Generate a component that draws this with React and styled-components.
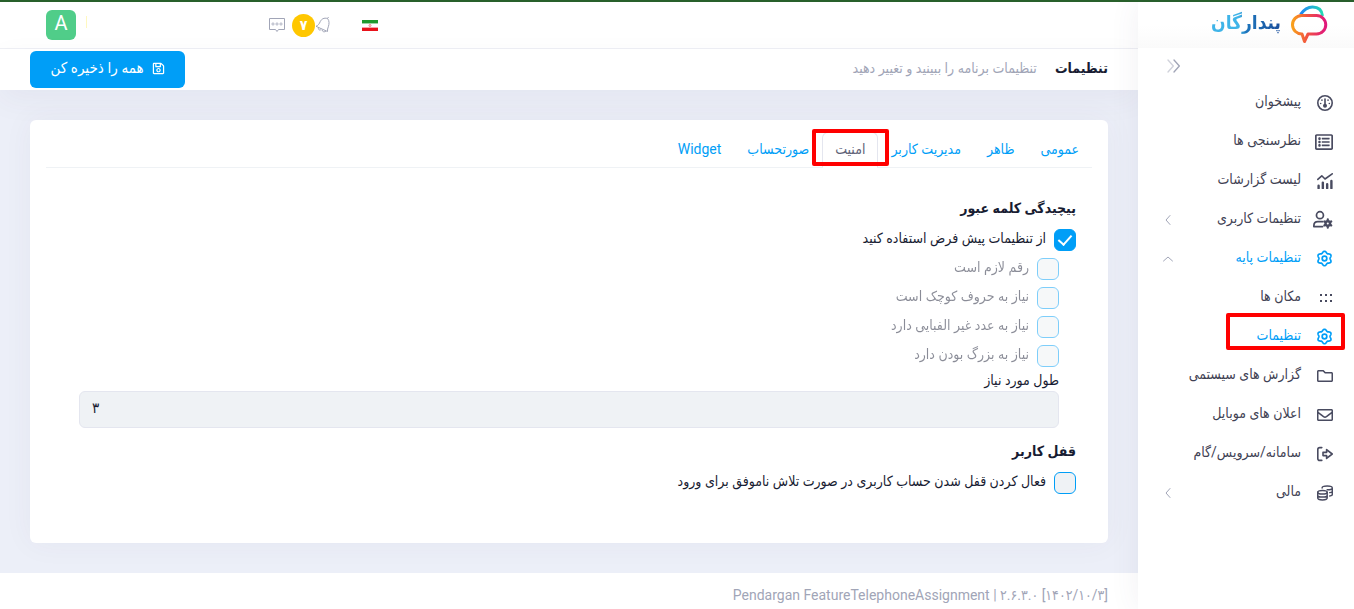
import styled, { createGlobalStyle, css } from "styled-components";
import { FaRegListAlt, FaRegFolder, FaRegEnvelope, FaRegSave } from "react-icons/fa";

const blue = "#009ef7";

const GlobalStyle = createGlobalStyle`
  * {
    box-sizing: border-box;
  }

  body {
    margin: 0;
    background: #eceff8;
    color: #181c32;
    font-family: Roboto, "DejaVu Sans Condensed", "DejaVu Sans", sans-serif;
    font-size: 14px;
  }

  button,
  input {
    font-family: inherit;
  }
`;

const Page = styled.div`
  direction: rtl;
  display: flex;
  min-height: 100vh;
  border-top: 2px solid #28602b;
`;

const Sidebar = styled.aside`
  width: 216px;
  flex-shrink: 0;
  display: flex;
  flex-direction: column;
  background: #fff;
  z-index: 2;
  box-shadow: 0 0 28px rgba(82, 63, 105, 0.08);
`;

const Brand = styled.a`
  height: 46px;
  display: flex;
  align-items: center;
  gap: 9px;
  padding: 0 26px;
  background: linear-gradient(#fff 50%, #fafafa);
  text-decoration: none;
`;

const BrandName = styled.span`
  font-size: 19px;
  line-height: 36px;
  padding-bottom: 4px;
  font-weight: 700;
  background: linear-gradient(to left, #1b4f9c, #1d75bc 50%, #3fb4e8 60%);
  background-clip: text;
  color: transparent;
`;

const Toggle = styled.button`
  align-self: flex-end;
  display: flex;
  margin: 0 0 0 28px;
  padding: 10px 0 9px;
  border: 0;
  background: none;
`;

const Nav = styled.nav`
  display: flex;
  flex-direction: column;
`;

const NavLink = styled.a`
  position: relative;
  height: 39px;
  display: flex;
  align-items: center;
  gap: 12px;
  padding: 0 21px 0 25px;
  color: ${(p) => (p.$active ? blue : "#3f4254")};
  text-decoration: none;
`;

const NavIcon = styled.span`
  width: 20px;
  display: flex;
  color: ${(p) => (p.$active ? blue : "#494b60")};
`;

const NavText = styled.span`
  flex: 1;
  line-height: 20px;
  padding-bottom: 3px;
`;

const marked = css`
  content: "";
  position: absolute;
  border: 4px solid #f00;
  border-radius: 2px;
`;

const MarkedLink = styled(NavLink)`
  &::after {
    ${marked}
    inset: -4px 9px 6px 88px;
  }
`;

const Main = styled.div`
  flex: 1;
  min-width: 0;
  display: flex;
  flex-direction: column;
`;

const Header = styled.header`
  height: 47px;
  display: flex;
  align-items: center;
  justify-content: flex-end;
  gap: 10px;
  padding: 0 46px;
  background: #fff;
  border-bottom: 1px solid #eff0f5;
`;

const Tools = styled.div`
  display: flex;
  align-items: center;
  margin-left: 171px;
`;

const Divider = styled.span`
  width: 1px;
  height: 12px;
  margin-bottom: 6px;
  background: #fff8c0;
`;

const ToolButton = styled.button`
  display: flex;
  padding: 0;
  border: 0;
  background: none;
`;

const FlagButton = styled(ToolButton)`
  margin-left: 31px;
`;

const Count = styled.span`
  width: 23px;
  height: 23px;
  margin-left: 6px;
  border-radius: 50%;
  background: #ffc700;
  color: #fff;
  font-weight: 700;
  line-height: 22px;
  text-align: center;
`;

const Avatar = styled.button`
  width: 30px;
  height: 30px;
  padding: 0 0 5px;
  border: 0;
  border-radius: 6px;
  background: #50cd89;
  color: #fff;
  font-size: 20px;
`;

const Subheader = styled.div`
  height: 41px;
  display: flex;
  align-items: center;
  gap: 18px;
  padding: 0 30px;
  background: #fff;
  box-shadow: 0 10px 30px rgba(82, 63, 105, 0.05);
`;

const PageTitle = styled.h1`
  margin: 0;
  padding-bottom: 3px;
  font-size: 14px;
  font-weight: 700;
`;

const PageNote = styled.span`
  flex: 1;
  padding-bottom: 3px;
  color: #a1a5b7;
`;

const SaveButton = styled.button`
  width: 155px;
  height: 37px;
  display: flex;
  align-items: center;
  justify-content: center;
  gap: 8px;
  padding: 0 0 3px;
  border: 0;
  border-radius: 6px;
  background: ${blue};
  color: #fff;
  font-size: 15px;
`;

const Content = styled.main`
  flex: 1;
  padding: 30px;
`;

const Card = styled.section`
  height: 100%;
  padding: 12px 16px 46px;
  border-radius: 6px;
  background: #fff;
  box-shadow: 0 0 30px rgba(82, 63, 105, 0.05);
`;

const Tabs = styled.div`
  display: flex;
  border-bottom: 1px solid #eff2f5;
`;

const Tab = styled.button`
  position: relative;
  height: 36px;
  margin-bottom: -1px;
  padding: 0 12px 3px;
  border: 1px solid ${(p) => (p.$active ? "#e4e6ef" : "transparent")};
  border-bottom-color: ${(p) => (p.$active ? "#fff" : "transparent")};
  border-radius: 6px 6px 0 0;
  background: none;
  color: ${(p) => (p.$active ? "#5e6278" : blue)};
  font-size: 14px;
`;

const MarkedTab = styled(Tab)`
  &::after {
    ${marked}
    inset: -4px -12px 1px -11px;
  }
`;

const Form = styled.form`
  padding: 26px 16px 0;
`;

const Heading = styled.h2`
  margin: 0 0 3px;
  font-size: 14px;
  line-height: 28px;
  font-weight: 700;
`;

const Check = styled.label`
  height: 29px;
  display: flex;
  align-items: center;
  gap: 8px;
  opacity: ${(p) => (p.$off ? 0.5 : 1)};
`;

const CheckText = styled.span`
  padding-bottom: 3px;
`;

const Box = styled.input`
  appearance: none;
  width: 22px;
  height: 22px;
  margin: 0;
  display: flex;
  align-items: center;
  justify-content: center;
  border: 1px solid ${blue};
  border-radius: 6px;
  background: #eff2f5;

  &:checked {
    background: ${blue};
  }

  &:checked::before {
    content: "";
    width: 6px;
    height: 11px;
    margin-bottom: 3px;
    border: solid #fff;
    border-width: 0 2px 2px 0;
    transform: rotate(42deg);
  }
`;

const Nested = styled.div`
  display: flex;
  flex-direction: column;
  padding: 0 17px 9px;
`;

const Label = styled.label`
  line-height: 21px;
`;

const LengthInput = styled.input`
  width: 100%;
  height: 37px;
  padding: 0 12px 4px;
  border: 1px solid #e4e6ef;
  border-radius: 6px;
  background: #eff2f5;
  color: #181c32;
  font-size: 15px;
  text-align: left;
`;

const Footer = styled.footer`
  direction: ltr;
  padding: 12px 30px 4px;
  background: #fff;
  color: #a1a5b7;
  font-size: 14px;
  line-height: 20px;
  text-align: right;
`;

const Line = ({ children, size = 16, box = "2 2 20 20", width = 2, ...rest }) => (
  <svg
    width={size}
    height={size}
    viewBox={box}
    fill="none"
    stroke="currentColor"
    strokeWidth={width}
    strokeLinecap="round"
    strokeLinejoin="round"
    {...rest}
  >
    {children}
  </svg>
);

const Gauge = () => (
  <Line>
    <circle cx="12" cy="12" r="9" />
    <path d="M12 7v8" />
    <circle cx="12" cy="15.5" r="1.5" fill="currentColor" />
    <path d="M8.2 8.4v.1M15.8 8.4v.1M6.6 12.6v.1M17.4 12.6v.1" />
  </Line>
);

const Analytics = () => (
  <Line>
    <path d="M3 10l5-4.500 4 4 9-6.500" />
    <path d="M4 18v3M9.300 14v7M14.700 16v5M20 12v9" strokeWidth="3" />
  </Line>
);

const UserCog = () => (
  <Line size={20} box="1 2 23 23">
    <circle cx="9" cy="8" r="4" />
    <path d="M12 21H2v-1c0-3 2-4.500 4.500-4.500H12" />
    <circle cx="18" cy="17.500" r="2.600" strokeWidth="2.800" />
    <path d="M18 12.700v1M18 21.300v1M14 15.200l.8.500M21.200 19.300l.8.500M14 19.800l.8-.5M21.200 15.700l.8-.5" strokeWidth="2.500" />
  </Line>
);

// outline of a cog with six rounded teeth
const cogPoints = Array.from({ length: 72 }, (_, i) => {
  const angle = (i * Math.PI) / 36;
  const radius = 8.3 - 1.1 * Math.cos(6 * angle);
  return `${(12 + radius * Math.cos(angle)).toFixed(2)},${(12 + radius * Math.sin(angle)).toFixed(2)}`;
}).join(" ");

const Cog = () => (
  <Line size={17} box="1 1 22 22" width={2.2}>
    <polygon points={cogPoints} />
    <circle cx="12" cy="12" r="3" />
  </Line>
);

const Dots = () => (
  <svg width="14" height="20" viewBox="0 0 14 20" fill="currentColor">
    {[1, 6, 11].map((x) => (
      <g key={x}>
        <rect x={x} y="6" width="2" height="2" />
        <rect x={x} y="12" width="2" height="2" />
      </g>
    ))}
  </svg>
);

const Exit = () => (
  <Line>
    <path d="M8 4H5.500A2.500 2.500 0 0 0 3 6.500v11A2.500 2.500 0 0 0 5.500 20H8" />
    <path d="M9.500 10H14V6.500l7 5.500-7 5.500V14H9.500z" />
  </Line>
);

const Coins = () => (
  <Line box="1 1 22 22">
    <ellipse cx="8.500" cy="11" rx="6.500" ry="2.500" />
    <path d="M2 11v8c0 1.400 2.900 2.500 6.500 2.500S15 20.400 15 19v-8M2 15c0 1.400 2.900 2.500 6.500 2.500S15 16.400 15 15" />
    <path d="M8 5c0-1.400 3-2.500 7-2.500s7 1.100 7 2.500-3 2.500-7 2.500M22 5v9c0 1-1.500 1.700-3.500 2M22 9.500c0 1-1.500 1.700-3.500 2" />
  </Line>
);

const Chevron = ({ up }) => (
  <Line size={10} stroke="#a1a5b7">
    <path d={up ? "M3 16l9-8 9 8" : "M16 3l-8 9 8 9"} />
  </Line>
);

const Logo = () => (
  <svg width="38" height="40" viewBox="0 0 38 40" fill="none" strokeWidth="3">
    <defs>
      <linearGradient id="cool">
        <stop offset="0" stopColor="#1f86f5" />
        <stop offset="1" stopColor="#25d9b4" />
      </linearGradient>
      <linearGradient id="warm">
        <stop offset="0" stopColor="#f9a01b" />
        <stop offset="0.400" stopColor="#f2583e" />
        <stop offset="1" stopColor="#e0177c" />
      </linearGradient>
    </defs>
    <path d="M10.500 9.500C14 4.500 17 2 22.500 2c6 0 9.500 3.500 10 9" stroke="url(#cool)" />
    <path
      d="M11.500 10.500h15a9 9 0 0 1 0 18.500h-8.500l-3.500 7.500-2.500-7.500A9.250 9.250 0 0 1 11.500 10.500z"
      stroke="url(#warm)"
      strokeLinejoin="round"
    />
  </svg>
);

const Flag = () => (
  <svg width="16" height="11" viewBox="0 0 16 11">
    <rect width="16" height="11" fill="#fff" />
    <rect width="16" height="3" fill="#1f9a2e" />
    <rect y="3" width="16" height="1" fill="#9fd3a4" />
    <rect y="7" width="16" height="1" fill="#f5a5a8" />
    <rect y="8" width="16" height="3" fill="#e8121b" />
    <circle cx="8" cy="5.500" r="1" fill="none" stroke="#ee7a7f" />
  </svg>
);

const Bell = () => (
  <svg width="16" height="18" viewBox="0 0 16 18" fill="none" stroke="#a1a5b7">
    <path d="M12.500 2.500C9 1.500 6.500 3 5.300 5.500 4.300 8 3 9.500 1 10.300l11.500 5.200c-.2-2 .2-3 .8-4.700 1-3 1.200-6-.8-8.300z" />
    <path d="M3.500 11.500c-.5 2 1 3.500 2.800 1.800M7 14c.5 1.800 2.500 2.500 4 1M12.500 2.500l1-1.500" />
  </svg>
);

const Message = () => (
  <svg width="18" height="15" viewBox="0 0 18 15" fill="none" stroke="#a1a5b7">
    <path d="M1.500.500h15v11h-6L9 13.500 7.500 11.500h-6z" />
    <g strokeWidth="0.800">
      <circle cx="5" cy="6" r="1.100" />
      <circle cx="9" cy="6" r="1.100" />
      <circle cx="13" cy="6" r="1.100" />
    </g>
  </svg>
);

const menu = [
  { text: "پیشخوان", icon: <Gauge /> },
  { text: "نظرسنجی ها", icon: <FaRegListAlt size={18} /> },
  { text: "لیست گزارشات", icon: <Analytics /> },
  { text: "تنظیمات کاربری", icon: <UserCog />, arrow: "left" },
  { text: "تنظیمات پایه", icon: <Cog />, arrow: "up", active: true },
  { text: "مکان ها", icon: <Dots /> },
  { text: "تنظیمات", icon: <Cog />, active: true, mark: true },
  { text: "گزارش های سیستمی", icon: <FaRegFolder size={16} /> },
  { text: "اعلان های موبایل", icon: <FaRegEnvelope size={16} /> },
  { text: "سامانه/سرویس/گام", icon: <Exit /> },
  { text: "مالی", icon: <Coins />, arrow: "left" },
];

const tabs = ["عمومی", "ظاهر", "مدیریت کاربر", "امنیت", "صورتحساب", "Widget"];

const rules = [
  "رقم لازم است",
  "نیاز به حروف کوچک است",
  "نیاز به عدد غیر الفبایی دارد",
  "نیاز به بزرگ بودن دارد",
];

export default function App() {
  return (
    <Page>
      <GlobalStyle />
      <Sidebar>
        <Brand href="#">
          <Logo />
          <BrandName>پندارگان</BrandName>
        </Brand>
        <Toggle type="button" aria-label="بستن منو">
          <Line size={16} box="0 0 24 24" stroke="#a1a5b7">
            <path d="M3 3l8 9-8 9" opacity="0.5" />
            <path d="M12 3l8 9-8 9" />
          </Line>
        </Toggle>
        <Nav>
          {menu.map((item) => {
            const Item = item.mark ? MarkedLink : NavLink;
            return (
              <Item href="#" key={item.text} $active={item.active}>
                <NavIcon $active={item.active}>{item.icon}</NavIcon>
                <NavText>{item.text}</NavText>
                {item.arrow && <Chevron up={item.arrow === "up"} />}
              </Item>
            );
          })}
        </Nav>
      </Sidebar>

      <Main>
        <Header>
          <Tools>
            <FlagButton type="button" aria-label="زبان">
              <Flag />
            </FlagButton>
            <ToolButton type="button" aria-label="اعلان ها">
              <Bell />
            </ToolButton>
            <Count>۷</Count>
            <ToolButton type="button" aria-label="پیام ها">
              <Message />
            </ToolButton>
          </Tools>
          <Divider />
          <Avatar type="button">A</Avatar>
        </Header>
        <Subheader>
          <PageTitle>تنظیمات</PageTitle>
          <PageNote>تنظیمات برنامه را ببینید و تغییر دهید</PageNote>
          <SaveButton type="button">
            <FaRegSave size={13} />
            همه را ذخیره کن
          </SaveButton>
        </Subheader>

        <Content>
          <Card>
            <Tabs role="tablist">
              {tabs.map((name) => {
                const active = name === "امنیت";
                const Item = active ? MarkedTab : Tab;
                return (
                  <Item type="button" role="tab" key={name} aria-selected={active} $active={active}>
                    {name}
                  </Item>
                );
              })}
            </Tabs>
            <Form>
              <Heading>پیچیدگی کلمه عبور</Heading>
              <Check>
                <Box type="checkbox" defaultChecked />
                <CheckText>از تنظیمات پیش فرض استفاده کنید</CheckText>
              </Check>
              <Nested>
                {rules.map((rule) => (
                  <Check key={rule} $off>
                    <Box type="checkbox" disabled />
                    <CheckText>{rule}</CheckText>
                  </Check>
                ))}
                <Label htmlFor="length">طول مورد نیاز</Label>
                <LengthInput id="length" defaultValue="۳" disabled />
              </Nested>
              <Heading>قفل کاربر</Heading>
              <Check>
                <Box type="checkbox" />
                <CheckText>فعال کردن قفل شدن حساب کاربری در صورت تلاش ناموفق برای ورود</CheckText>
              </Check>
            </Form>
          </Card>
        </Content>
        <Footer>Pendargan FeatureTelephoneAssignment | ۲.۶.۳.۰ [۱۴۰۲/۱۰/۳]</Footer>
      </Main>
    </Page>
  );
}
